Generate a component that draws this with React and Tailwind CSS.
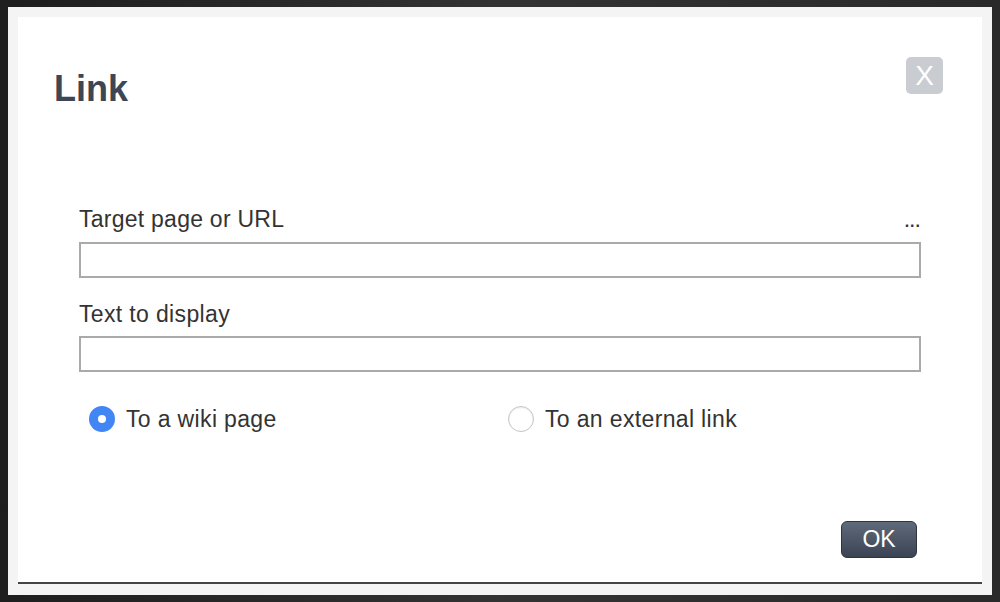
import React, { useState } from "react";

const font = { fontFamily: '"Liberation Sans", Arial, sans-serif' };

const Radio = ({ checked, label, onClick }) => (
  <button type="button" onClick={onClick} className="flex items-center gap-[11px] text-[23px] tracking-[0.35px] text-[#333]">
    {checked ? (
      <span className="w-[26px] h-[26px] rounded-full bg-[#4285f4] flex items-center justify-center">
        <span className="w-[8px] h-[8px] rounded-full bg-white" />
      </span>
    ) : (
      <span className="w-[26px] h-[26px] rounded-full border-[1.5px] border-[#c4c4c4] bg-white shadow-[inset_0_1px_2px_rgba(0,0,0,0.08)]" />
    )}
    <span>{label}</span>
  </button>
);

const App = () => {
  const [mode, setMode] = useState("wiki");
  const [target, setTarget] = useState("");
  const [text, setText] = useState("");

  return (
    <div
      style={font}
      className="w-[1000px] h-[602px] bg-gradient-to-r from-[#1e1e1e] via-[#333] to-[#2a2a2a] pt-[7px] pb-[7px] px-[8px] flex"
    >
      <div className="flex-1 bg-[#f4f4f4] p-[10px] pb-[11px] flex">
        <div className="flex-1 bg-white border-b-2 border-[#444] flex flex-col">
          <div className="flex justify-between items-start pl-[36px] pr-[39px] pt-[52px]">
            <h1 className="text-[36px] leading-[40px] font-bold text-[#3d4654]">Link</h1>
            <button
              type="button"
              className="mt-[-12px] w-[37px] h-[37px] rounded-[5px] bg-[#c9ccd1] text-white text-[28px] leading-none flex items-center justify-center"
            >
              X
            </button>
          </div>

          <div className="px-[61px] pt-[96px] flex flex-col">
            <div className="flex justify-between items-baseline text-[23px] leading-[28px] tracking-[0.25px] text-[#333]">
              <label>Target page or URL</label>
              <span className="text-[16px] font-bold tracking-[1px]">...</span>
            </div>
            <input
              value={target}
              onChange={(e) => setTarget(e.target.value)}
              className="mt-[6px] h-[36px] border-2 border-[#aaa] outline-none px-2 text-[18px]"
            />

            <label className="mt-[22px] text-[23px] leading-[28px] tracking-[0.35px] text-[#333]">Text to display</label>
            <input
              value={text}
              onChange={(e) => setText(e.target.value)}
              className="mt-[8px] h-[36px] border-2 border-[#aaa] outline-none px-2 text-[18px]"
            />

            <div className="mt-[30px] flex pl-[10px]">
              <div className="w-[419px]">
                <Radio checked={mode === "wiki"} label="To a wiki page" onClick={() => setMode("wiki")} />
              </div>
              <Radio checked={mode === "external"} label="To an external link" onClick={() => setMode("external")} />
            </div>
          </div>

          <div className="mt-auto flex justify-end pr-[65px] pb-[24px]">
            <button
              type="button"
              className="w-[76px] h-[37px] rounded-[6px] bg-gradient-to-b from-[#5f6a7a] to-[#3b4453] border border-[#2e3440] text-white text-[23px] leading-none"
            >
              OK
            </button>
          </div>
        </div>
      </div>
    </div>
  );
};

export default App;
